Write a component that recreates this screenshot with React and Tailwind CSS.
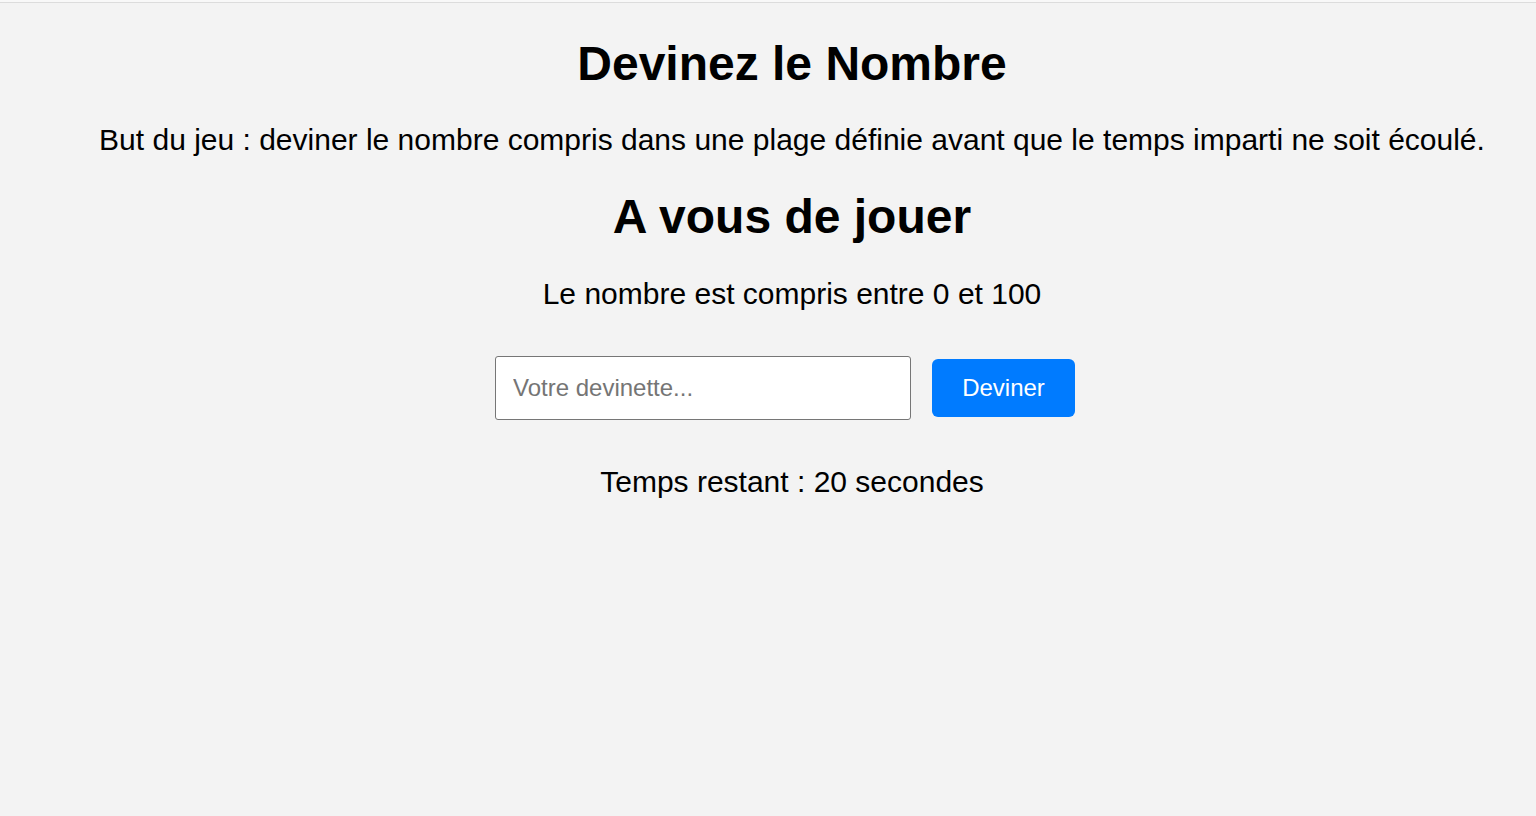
export default function App() {
  return (
    <div className="min-h-screen bg-[#f3f3f3] font-['Liberation_Sans',Arial,sans-serif] text-black">
      <div className="h-[2px] bg-[#f8f8f8]" />
      <div className="h-px bg-[#dcdcdc]" />
      <div className="flex flex-col items-center pl-12 text-center">
        <h1 className="mt-[33px] text-[48px] font-bold leading-[55px]">Devinez le Nombre</h1>
        <p className="mt-[32px] text-[30px] leading-[34px]">
          But du jeu : deviner le nombre compris dans une plage définie avant que le temps imparti ne soit écoulé.
        </p>
        <h2 className="mt-[32px] text-[48px] font-bold leading-[55px]">A vous de jouer</h2>
        <p className="mt-[33px] text-[30px] leading-[34px]">Le nombre est compris entre 0 et 100</p>
        <div className="mt-[45px] mr-[14px] flex items-center gap-[21px]">
          <input
            type="text"
            placeholder="Votre devinette..."
            className="h-[64px] w-[416px] rounded-[3px] border border-[#767676] bg-white px-[17px] text-[24px] placeholder:text-[#757575] outline-none"
          />
          <button className="h-[58px] w-[143px] rounded-[6px] bg-[#007bff] text-[24px] text-white">
            Deviner
          </button>
        </div>
        <p className="mt-[45px] text-[30px] leading-[34px]">Temps restant : 20 secondes</p>
      </div>
    </div>
  );
}
